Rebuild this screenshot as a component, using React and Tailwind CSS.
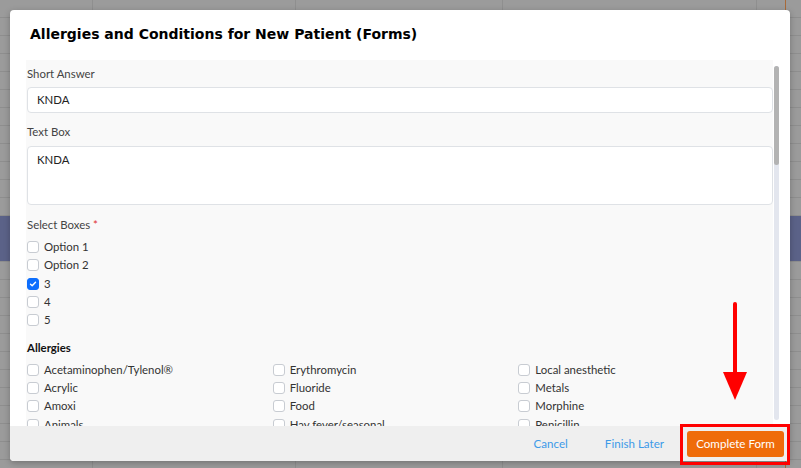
import { useState } from "react";

const options = ["Option 1", "Option 2", "3", "4", "5"];

const allergies = [
  ["Acetaminophen/Tylenol®", "Erythromycin", "Local anesthetic"],
  ["Acrylic", "Fluoride", "Metals"],
  ["Amoxi", "Food", "Morphine"],
  ["Animals", "Hay fever/seasonal", "Penicillin"],
  ["Aspirin", "Ibuprofen", "Sulfa drugs"],
];

function Box({ checked }) {
  return (
    <span
      className={
        "w-[12px] h-[12px] rounded-[3px] border flex items-center justify-center shrink-0 " +
        (checked ? "bg-[#0d6efd] border-[#0d6efd]" : "bg-white border-[#c8ccd2]")
      }
    >
      {checked && (
        <svg width="8" height="8" viewBox="0 0 8 8">
          <path d="M1.5 4.2 L3.2 5.8 L6.5 2.2" stroke="white" strokeWidth="1.4" fill="none" strokeLinecap="round" strokeLinejoin="round" />
        </svg>
      )}
    </span>
  );
}

function Check({ label, checked }) {
  return (
    <div className="flex items-center gap-[5px] h-[18.3px] whitespace-nowrap">
      <Box checked={checked} />
      <span>{label}</span>
    </div>
  );
}

export default function App() {
  const [picked] = useState(["3"]);

  return (
    <div className="relative w-[801px] h-[468px] overflow-hidden bg-[#9b9b9b] font-['Lato',sans-serif]">
      {/* page behind the overlay */}
      <div className="flex flex-col">
        {Array.from({ length: 26 }).map((_, i) => (
          <div key={i} className={"border-b border-[#8e8e8e] " + (i === 12 ? "bg-[#5b6288] h-[46px]" : "h-[18px]")}>
            <div className="flex h-full">
              <div className="w-[93px] border-r border-[#8f8f8f]" />
              <div className="w-[203px] border-r border-[#8f8f8f]" />
              <div className="w-[207px] border-r border-[#8f8f8f]" />
              <div className="w-[254px] border-r border-[#8f8f8f]" />
              <div className="w-[29px] border-r border-[#a86a3a]" />
            </div>
          </div>
        ))}
      </div>

      {/* modal */}
      <div className="absolute left-[10px] top-[10px] w-[780px] h-[451px] bg-white rounded-[4px] shadow-[0_2px_6px_rgba(0,0,0,0.25)] flex flex-col">
        <div className="h-[48px] pl-[20px] flex items-center">
          <h1 className="font-['DejaVu_Sans',sans-serif] font-bold text-[14px] text-black">
            Allergies and Conditions for New Patient (Forms)
          </h1>
        </div>

        <div className="flex-1 ml-[16px] mr-[11px] mt-[2px] flex overflow-hidden">
          <div className="w-[747px] bg-[#f9f9f9] pl-[1px] text-[11.4px] leading-[16px] text-[#333] overflow-hidden">
            <div className="pt-[6px] text-[#444]">Short Answer</div>
            <div className="mt-[5px] h-[26px] bg-white border border-[#dfe2e6] rounded-[4px] flex items-center pl-[9px] text-[#222]">
              KNDA
            </div>
            <div className="mt-[11px] text-[#444]">Text Box</div>
            <div className="mt-[6px] h-[59px] bg-white border border-[#dfe2e6] rounded-[4px] pl-[9px] pt-[5px] text-[#222]">
              KNDA
            </div>
            <div className="mt-[12px] text-[#444]">
              Select Boxes <span className="text-[#e03131]">*</span>
            </div>
            <div className="mt-[5px] flex flex-col">
              {options.map((o) => (
                <Check key={o} label={o} checked={picked.includes(o)} />
              ))}
            </div>
            <div className="mt-[11px] font-bold text-[#111]">Allergies</div>
            <div className="mt-[4px] w-[737px] grid grid-cols-3">
              {allergies.flat().map((a) => (
                <Check key={a} label={a} />
              ))}
            </div>
          </div>
          <div className="w-[5px] ml-[1px] mt-[6px] mb-[6px] bg-[#e3e6ee] rounded-full flex flex-col">
            <div className="h-[99px] bg-[#b3b3b3] rounded-full" />
          </div>
        </div>

        <div className="h-[35px] bg-[#efefef] rounded-b-[4px] flex items-center justify-end pr-[6px] text-[11.6px]">
          <span className="text-[#3d9ae8] mr-[37px]">Cancel</span>
          <span className="text-[#3d9ae8] mr-[23px]">Finish Later</span>
          <span className="bg-[#ef6c0a] text-white rounded-[3px] h-[26px] w-[97px] flex items-center justify-center">
            Complete Form
          </span>
        </div>
      </div>

      {/* annotation */}
      <div className="absolute left-[680px] top-[424px] w-[110px] h-[41px] border-[3px] border-[#ff0000]" />
      <svg className="absolute left-[720px] top-[300px]" width="30" height="102" viewBox="0 0 30 102">
        <line x1="15" y1="4" x2="15" y2="74" stroke="#ff0000" strokeWidth="4" strokeLinecap="round" />
        <polygon points="3,72 27,72 15,100" fill="#ff0000" />
      </svg>
    </div>
  );
}
